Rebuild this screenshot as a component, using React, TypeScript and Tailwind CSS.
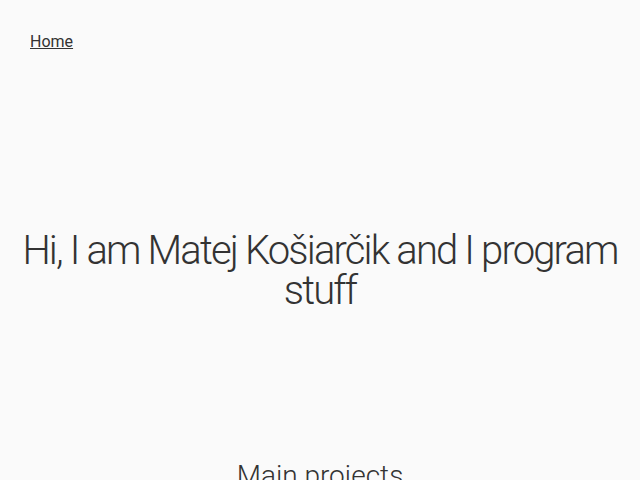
export default function App() {
  return (
    <div className="min-h-screen bg-[#fafafa] text-[#333] font-['Roboto',sans-serif]">
      <header className="h-[62px] px-[30px] pt-[30px]">
        <a href="#" className="text-base leading-5 underline">
          Home
        </a>
      </header>
      <section className="px-3 pt-[169px]">
        <h1 className="text-center text-[40px] font-light leading-[40px] tracking-[-1.85px]">
          Hi, I am Matej Košiarčik and I program stuff
        </h1>
      </section>
      <section className="pt-[144px]">
        <h2 className="text-center text-[28px] font-light">Main projects</h2>
      </section>
    </div>
  );
}
